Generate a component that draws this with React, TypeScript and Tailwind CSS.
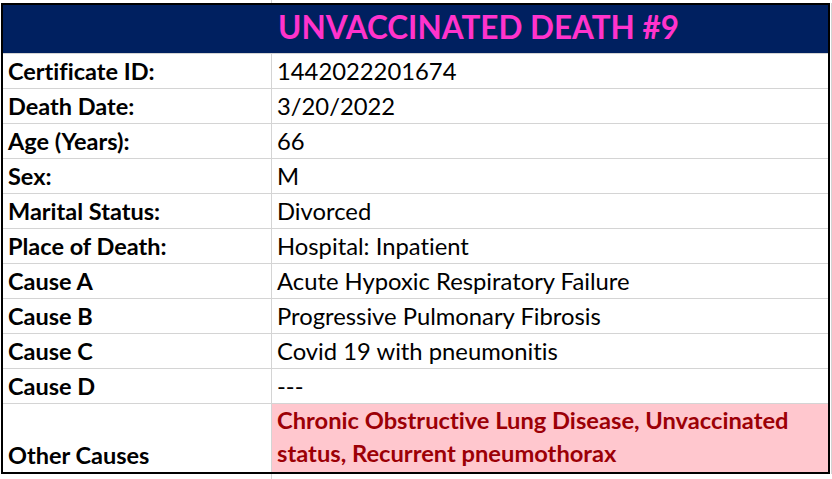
const rows: [string, string][] = [
  ["Certificate ID:", "1442022201674"],
  ["Death Date:", "3/20/2022"],
  ["Age (Years):", "66"],
  ["Sex:", "M"],
  ["Marital Status:", "Divorced"],
  ["Place of Death:", "Hospital: Inpatient"],
  ["Cause A", "Acute Hypoxic Respiratory Failure"],
  ["Cause B", "Progressive Pulmonary Fibrosis"],
  ["Cause C", "Covid 19 with pneumonitis"],
  ["Cause D", "---"],
];

const App = () => {
  return (
    <div
      className="w-[832px] h-[479px] bg-white flex flex-col text-black [font-variant-ligatures:none]"
      style={{ fontFamily: "Lato, 'Open Sans', sans-serif" }}
    >
      {/* sheet gridline above the table */}
      <div className="h-[3px] flex">
        <div className="w-[271px]" />
        <div className="w-px bg-[#d4d4d4]" />
      </div>

      <div className="flex">
        <div className="w-px" />
        <div className="w-[829px] h-[471px] border-2 border-black flex flex-col">
          <div className="h-[48px] bg-[#002060] flex items-center pl-[275px] pb-[2px]">
            <h1 className="text-[31.5px] font-bold text-[#ff33cc] leading-none">
              UNVACCINATED DEATH #9
            </h1>
          </div>

          {rows.map(([label, value]) => (
            <div key={label} className="h-[35px] flex border-t border-[#d4d4d4]">
              <div className="w-[268px] flex items-end pl-[5px] pb-[4px] text-[23.5px] font-bold leading-[26px]">
                {label}
              </div>
              <div className="flex-1 border-l border-[#d4d4d4] flex items-end pl-[5px] pb-[4px] text-[23.8px] leading-[26px]">
                {value}
              </div>
            </div>
          ))}

          <div className="flex-1 flex border-t border-[#d4d4d4]">
            <div className="w-[268px] flex items-end pl-[5px] pb-[4px] text-[23.5px] font-bold leading-[26px]">
              Other Causes
            </div>
            <div className="flex-1 border-l border-[#d4d4d4] bg-[#ffc7ce] flex items-end pl-[5px] pb-[2px] text-[23.7px] font-bold leading-[33px] text-[#9c0006]">
              <p>
                Chronic Obstructive Lung Disease, Unvaccinated
                <br />
                status, Recurrent pneumothorax
              </p>
            </div>
          </div>
        </div>
        {/* gridline right of the table */}
        <div className="w-px" />
        <div className="w-px bg-[#d4d4d4]" />
      </div>

      <div className="flex-1 flex">
        <div className="w-[271px]" />
        <div className="w-px bg-[#d4d4d4]" />
      </div>
    </div>
  );
};

export default App;
